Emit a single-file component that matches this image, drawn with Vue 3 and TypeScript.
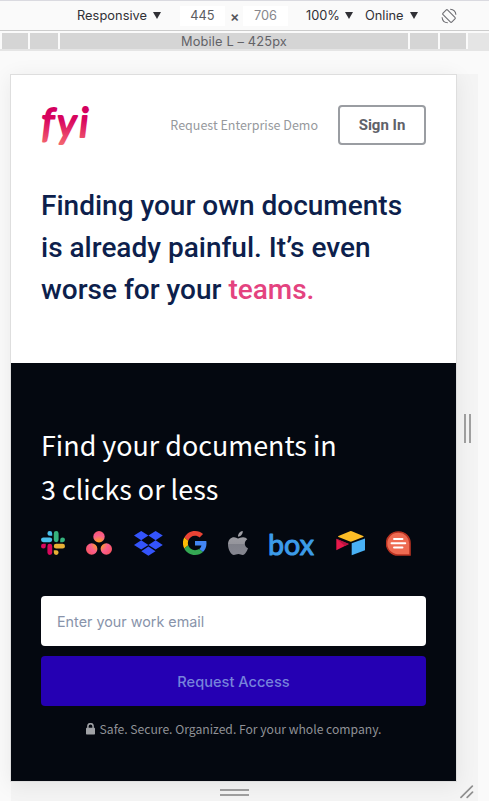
<script setup lang="ts">
const breakpoints: number[] = [26, 28, 348, 28, 26]
</script>

<template>
  <div class="devtools">
    <header class="toolbar">
      <span class="device">Responsive</span><i class="caret" />
      <span class="dim width">445</span>
      <span class="times">×</span>
      <span class="dim height">706</span>
      <span class="zoom">100%</span><i class="caret" />
      <span class="online">Online</span><i class="caret" />
      <svg class="rotate" width="16" height="16" viewBox="0 0 16 16" fill="none" stroke="#6e6e73" stroke-width="1.1">
        <rect x="4.7" y="1.7" width="6.6" height="12.6" rx="1.2" transform="rotate(-45 8 8)" />
        <path d="M9.200 1.200C12.500 1.400 14.700 3.600 14.900 6.800M6.800 14.800C3.500 14.600 1.300 12.400 1.100 9.200" />
      </svg>
    </header>
    <div class="ruler">
      <div v-for="(w, i) in breakpoints" :key="i" class="cell" :style="{ width: w + 'px' }">
        <span v-if="i === 2">Mobile L – 425px</span>
      </div>
      <div class="rest" />
    </div>
    <div class="stage">
      <div class="phone-row">
        <main class="page">
          <section class="hero">
            <nav>
              <svg class="logo" width="52" height="46" viewBox="0 0 52 46">
                <defs>
                  <linearGradient id="fyi" gradientUnits="userSpaceOnUse" x1="0" y1="4" x2="0" y2="45">
                    <stop offset="0" stop-color="#d3005e" /><stop offset=".3" stop-color="#d9075f" />
                    <stop offset="1" stop-color="#f87872" />
                  </linearGradient>
                </defs>
                <text x="0.500" y="33" textLength="47" lengthAdjust="spacing">fyi</text>
              </svg>
              <a class="demo">Request Enterprise Demo</a>
              <button class="signin">Sign In</button>
            </nav>
            <h1>
              <span>Finding your own documents</span><br>
              <span>is already painful. It’s even</span><br>
              <span>worse for your <em>teams.</em></span>
            </h1>
          </section>
          <section class="signup">
            <h2>Find your documents in<br>3 clicks or less</h2>
            <div class="apps">
              <svg width="24" height="24" viewBox="0 0 24 24">
                <path fill="#4bbfea" d="M8.8 0a2.4 2.4 0 0 0 0 4.8h2.4V2.4A2.4 2.4 0 0 0 8.8 0ZM8.8 6.4H2.4a2.4 2.4 0 0 0 0 4.8h6.4a2.4 2.4 0 0 0 0-4.8Z" />
                <path fill="#36b37e" d="M24 8.8a2.4 2.4 0 0 0-4.8 0v2.4h2.4A2.4 2.4 0 0 0 24 8.8ZM17.6 8.8V2.4a2.4 2.4 0 0 0-4.8 0v6.4a2.4 2.4 0 0 0 4.8 0Z" />
                <path fill="#e8b035" d="M15.2 24a2.4 2.4 0 0 0 0-4.8h-2.4v2.4a2.4 2.4 0 0 0 2.4 2.4ZM15.2 17.6h6.4a2.4 2.4 0 0 0 0-4.8h-6.4a2.4 2.4 0 0 0 0 4.8Z" />
                <path fill="#d9085c" d="M0 15.2a2.4 2.4 0 0 0 4.8 0v-2.4H2.4A2.4 2.4 0 0 0 0 15.2ZM6.4 15.2v6.4a2.4 2.4 0 0 0 4.8 0v-6.4a2.4 2.4 0 0 0-4.8 0Z" />
              </svg>
              <svg class="asana" width="26" height="24" viewBox="0 0 26 24">
                <defs>
                  <radialGradient id="asana" gradientUnits="userSpaceOnUse" cx="13" cy="13" r="16">
                    <stop offset="0" stop-color="#ffb900" /><stop offset=".55" stop-color="#f95d8f" />
                    <stop offset="1" stop-color="#f95353" />
                  </radialGradient>
                </defs>
                <g fill="url(#asana)"><circle cx="13" cy="5.7" r="5.7" /><circle cx="5.7" cy="18" r="5.7" /><circle cx="20.3" cy="18" r="5.7" /></g>
              </svg>
              <svg class="dropbox" width="29" height="25" viewBox="0 0 29 25" fill="#3454fb">
                <path d="m7.2 0 7.2 4.6-7.2 4.6L0 4.6ZM21.6 0l7.2 4.6-7.2 4.6-7.2-4.6ZM7.2 9.3l7.2 4.6-7.2 4.6L0 13.9ZM21.6 9.3l7.2 4.6-7.2 4.6-7.2-4.6ZM14.4 15.6l7.1 4.6-7.1 4.6-7.1-4.6Z" />
              </svg>
              <svg class="google" width="24" height="24" viewBox="0 0 48 48">
                <path fill="#ea4335" d="M24 9.5c3.5 0 6.700 1.200 9.200 3.600l6.900-6.900C35.900 2.400 30.500 0 24 0 14.600 0 6.500 5.400 2.600 13.200l8 6.200C12.400 13.700 17.700 9.500 24 9.500Z" />
                <path fill="#4285f4" d="M47 24.600c0-1.600-.2-3.100-.4-4.600H24v9h12.900c-.6 3-2.200 5.500-4.700 7.200l7.700 6C44.400 38 47 32 47 24.600Z" />
                <path fill="#fbbc05" d="M10.500 28.600a14.500 14.500 0 0 1 0-9.200l-8-6.200a24 24 0 0 0 0 21.600Z" />
                <path fill="#34a853" d="M24 48c6.500 0 11.900-2.100 15.900-5.800l-7.700-6c-2.200 1.500-4.900 2.300-8.200 2.300-6.300 0-11.600-4.200-13.500-9.900l-8 6.200C6.500 42.600 14.600 48 24 48Z" />
              </svg>
              <svg class="apple" width="20" height="25" viewBox="0 0 20 25">
                <defs><linearGradient id="apple" x1="0" y1="0" x2="0" y2="1"><stop offset="0" stop-color="#a2a2a8" /><stop offset=".55" stop-color="#94949b" /><stop offset=".56" stop-color="#80818a" /><stop offset="1" stop-color="#858690" /></linearGradient></defs>
                <path fill="url(#apple)" d="M10 7.400C11.300 7.400 13 6.100 15.200 6.200c1.800.1 3.200.8 4.100 2-3.700 2.300-3.100 7.500.7 9-.9 2.600-3 6.600-5.100 6.800-1.800.1-2.400-1-4.500-1s-2.800 1-4.500 1C3 24 0 18.300 0 13.500 0 8.600 3.100 6.200 6 6.200c1.700 0 3.100 1.200 4 1.200ZM10 5.700C9.800 2.800 12.100.3 14.700 0 15.100 3 12.600 5.600 10 5.700Z" />
              </svg>
              <svg class="box" width="46" height="26" viewBox="0 0 46 26"><text x="-1" y="24.200" textLength="46" lengthAdjust="spacingAndGlyphs">box</text></svg>
              <svg class="airtable" width="30" height="25" viewBox="0 0 30 25">
                <path fill="#fcbc26" d="M14 .3q.9-.4 1.800 0L27.200 5q.9.500 0 .9L15.700 10.500q-.9.300-1.800 0L2.500 6q-.9-.5 0-1Z" />
                <path fill="#49b1f5" d="M15.700 12.300 29 7.500v11.700L15.700 24.300Z" />
                <path fill="#e8194b" d="M.3 7.700 12.900 13 .3 19.200Z" /><path fill="#b71440" d="M.3 7.700 12.900 13 9 15Z" />
              </svg>
              <svg class="quip" width="25" height="25" viewBox="0 0 25 25">
                <path d="M12 1h.8A11.200 11.200 0 0 1 24 12.300V24H12A11.500 11.500 0 0 1 12 1Z" fill="#ee6b52" stroke="#b83221" stroke-width="1.600" />
                <path d="M8 8h8.500M5.500 12.200h13.800M8 16.500h8.500" stroke="#fff" stroke-width="1.900" stroke-linecap="round" />
              </svg>
            </div>
            <input type="email" placeholder="Enter your work email">
            <button class="access">Request Access</button>
            <p class="note">
              <svg width="9" height="12" viewBox="0 0 9 12"><path d="M1.900 5V3.300a2.600 2.600 0 0 1 5.200 0V5" fill="none" stroke="#a0a2a6" stroke-width="1.500" /><rect y="4.700" width="9" height="6.800" rx=".7" fill="#a0a2a6" /></svg>
              <span>Safe. Secure. Organized. For your whole company.</span>
            </p>
          </section>
        </main>
        <div class="resize-x"><i /><i /></div>
      </div>
      <div class="resize-y">
        <div class="grip"><i /><i /></div>
        <svg width="14" height="14" viewBox="0 0 14 14" stroke="#909090" stroke-width="1.700" stroke-linecap="round"><path d="M1 12.400 12.300 1.200M7.200 12.400l5.300-5.200" /></svg>
      </div>
    </div>
  </div>
</template>

<style>
body { margin: 0; overflow: hidden; }
</style>
<style scoped>
* { box-sizing: border-box; }
.devtools { width: 489px; height: 801px; background: #fafafa; overflow: hidden; font-family: Inter, Roboto, sans-serif; display: flex; flex-direction: column; }
.toolbar { flex: none; height: 31px; border-top: 1px solid #dadae0; border-bottom: 1px solid #ccc; display: flex; align-items: center; font-size: 12.8px; color: #303035; padding-left: 77px; }
.device { width: 70px; letter-spacing: .05px; white-space: nowrap; }
.caret { width: 8px; height: 7px; margin-left: 6px; background: #303035; clip-path: polygon(0 0, 100% 0, 50% 100%); }
.dim { height: 20px; line-height: 20px; width: 45px; background: #fff; text-align: center; color: #5c5c60; margin-left: 19px; }
.dim.height { margin-left: 4px; color: #87878c; }
.times { width: 9px; margin-left: 5px; text-align: center; font-size: 14px; font-weight: 600; color: #55555a; padding-top: 1px; }
.zoom { width: 33px; margin-left: 18px; white-space: nowrap; }
.online { width: 39px; margin-left: 12px; white-space: nowrap; }
.rotate { margin-left: 23px; }
.ruler { flex: none; height: 20px; padding-top: 2px; border-bottom: 2px solid #e5e5e5; background: #fafafa; display: flex; gap: 2px; padding-left: 2px; }
.cell { flex: none; background: #d5d5d5; font-size: 12.8px; line-height: 17px; height: 16px; text-align: center; color: #626267; letter-spacing: .15px; }
.rest { flex: 1; background: #e5e5e5; }
.stage { padding: 23px 0 0 10px; height: 750px; }
.phone-row { display: flex; height: 708px; }
.page { flex: none; width: 447px; border: 1px solid #dedede; box-shadow: 0 3px 20px rgba(0,0,0,.07); position: relative; background: #fff; }
.hero { height: 288px; padding: 30px; }
nav { display: flex; height: 40px; align-items: center; }
.logo { align-self: flex-start; margin-top: -1px; flex: none; overflow: visible; }
.logo text { font: italic 400 40px Lato, sans-serif; fill: url(#fyi); stroke: url(#fyi); stroke-width: 2; stroke-linejoin: round; }
.demo { margin-left: auto; margin-right: 20px; margin-top: -2px; font: 400 12.5px "Noto Sans CJK SC", sans-serif; color: #96999d; white-space: nowrap; }
.signin { width: 88px; height: 40px; flex: none; padding: 0; border: 2px solid #9a9da2; border-radius: 4px; background: #fff; color: #5f6269; font: 700 15px Roboto, sans-serif; }
h1 { margin: 40px 0 0; font: 500 28px/42px Roboto, sans-serif; color: #0d1f4c; white-space: nowrap; }
h1 em { font-style: normal; color: #e4437f; }
.signup { height: 418px; background: #040810; padding: 60px 30px 0; }
h2 { margin: 0; font: 400 26.9px/44px "Noto Sans CJK SC", sans-serif; color: #fff; white-space: nowrap; }
.apps { display: flex; height: 25px; margin-top: 20px; }
.apps svg { flex: none; }
.asana { margin-left: 21px; }
.dropbox { margin-left: 22px; }
.google { margin-left: 20px; }
.apple { margin-left: 21px; }
.box { margin-left: 21px; overflow: visible; }
.box text { font: 400 29px Lato, sans-serif; fill: #3c9ce9; stroke: #3c9ce9; stroke-width: 1; stroke-linejoin: round; }
.airtable { margin-left: 21px; }
.quip { margin-left: 20px; }
input, .access { display: block; width: 385px; height: 50px; border: 0; border-radius: 4px; outline: 0; }
input { margin-top: 40px; padding: 0 16px; background: #fff; font: 400 14.35px Inter, sans-serif; }
input::placeholder { color: #8893aa; opacity: 1; }
.access { margin-top: 10px; padding: 2px 0 0; background: #2500b3; color: #7683db; font: 500 14.6px Inter, sans-serif; }
.note { margin: 13px 0 0; height: 20px; display: flex; justify-content: center; align-items: center; gap: 5px; font: 400 12.15px/20px "Noto Sans CJK SC", sans-serif; color: #909297; white-space: nowrap; }
.resize-x { width: 21px; background: rgba(0,0,0,.025); display: flex; justify-content: center; align-items: center; gap: 3px; }
.resize-x i { width: 2px; height: 29px; background: #a0a0a0; }
.resize-y { width: 467px; margin-left: 1px; height: 20px; background: rgba(0,0,0,.025); display: flex; align-items: center; justify-content: flex-end; padding-right: 4px; }
.grip { width: 29px; margin-right: 211px; display: flex; flex-direction: column; gap: 3px; }
.grip i { height: 2px; background: #a0a0a0; }
</style>
